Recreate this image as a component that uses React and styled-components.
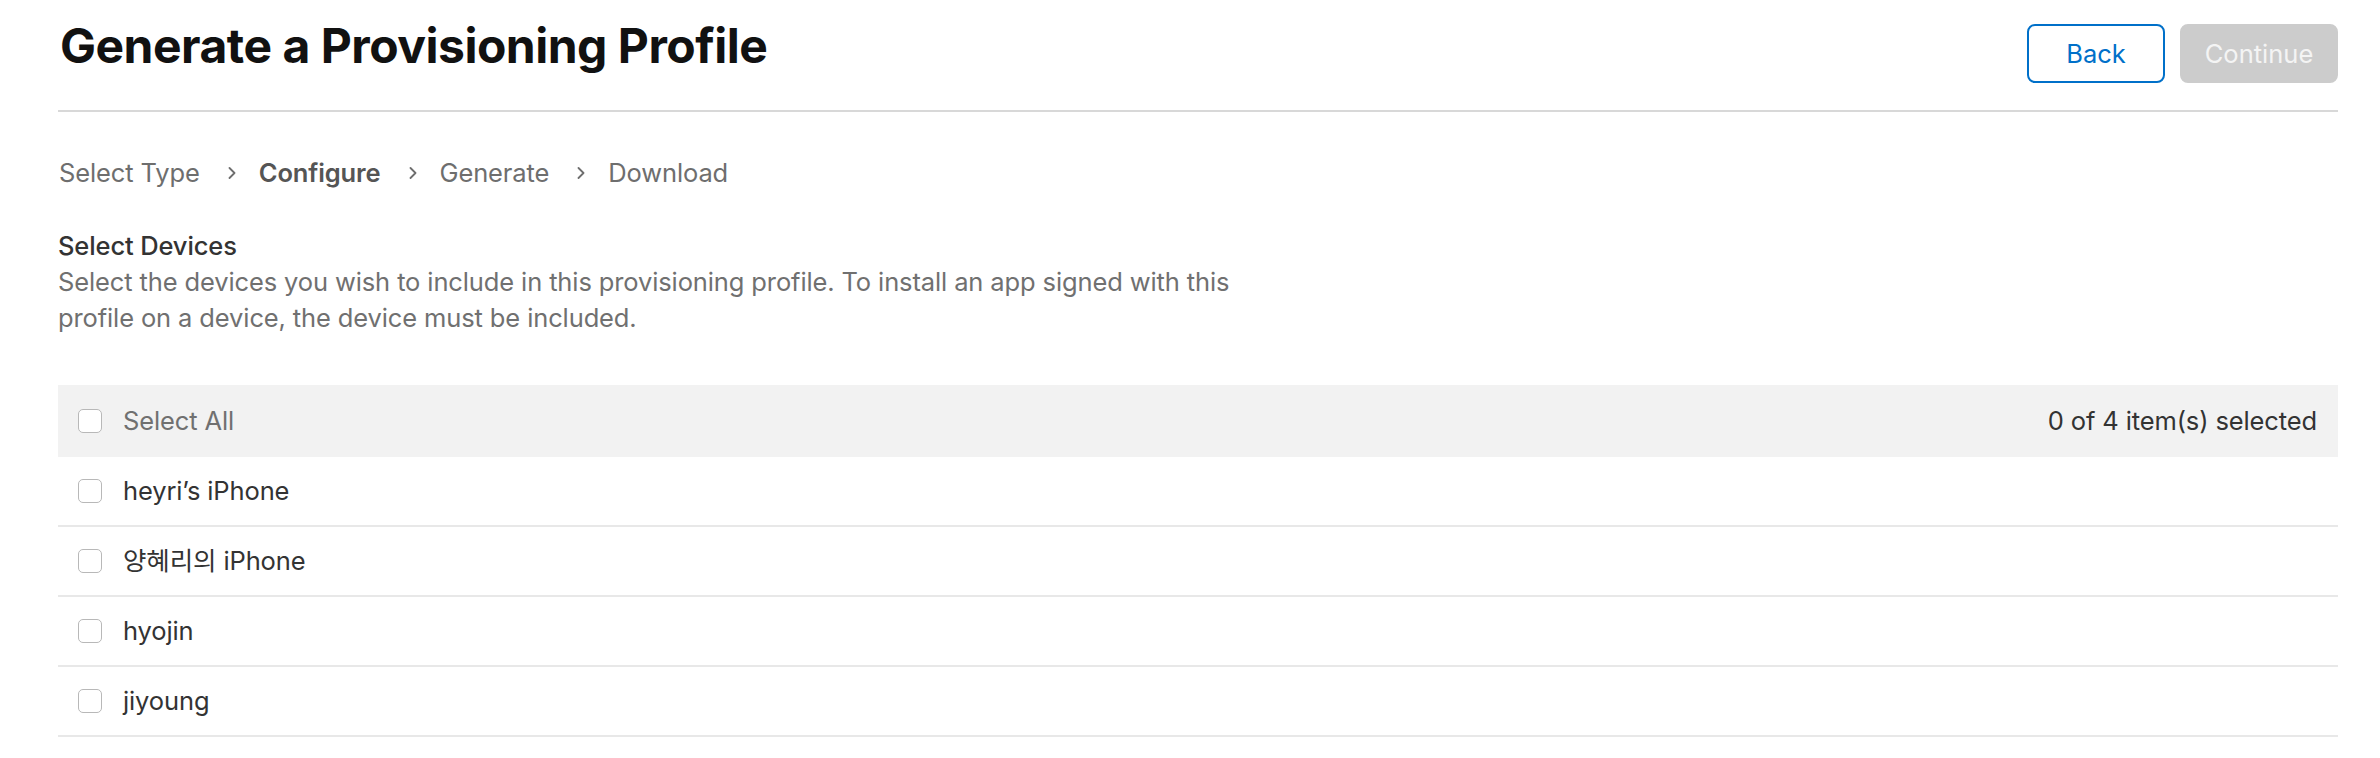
import React from "react";
import styled, { createGlobalStyle } from "styled-components";

const GlobalStyle = createGlobalStyle`
  body {
    margin: 0;
    background: #ffffff;
    font-family: Inter, "Noto Sans CJK KR", sans-serif;
  }
`;

const devices = ["heyri’s iPhone", "양혜리의 iPhone", "hyojin", "jiyoung"];
const steps = [
  { label: "Select Type" },
  { label: "Configure", active: true },
  { label: "Generate" },
  { label: "Download" },
];

const Chevron = () => (
  <svg width="8" height="12" viewBox="0 0 8 12">
    <polyline
      points="1.5,1 6.5,6 1.5,11"
      fill="none"
      stroke="#6e6e6e"
      strokeWidth="1.8"
      strokeLinecap="round"
      strokeLinejoin="round"
    />
  </svg>
);

const App = () => {
  return (
    <>
      <GlobalStyle />
      <Page>
        <Header>
          <Title>Generate a Provisioning Profile</Title>
          <Actions>
            <Button variant="outline">Back</Button>
            <Button variant="disabled">Continue</Button>
          </Actions>
        </Header>

        <Steps>
          {steps.map((step, index) => (
            <React.Fragment key={step.label}>
              {index > 0 && (
                <StepArrow>
                  <Chevron />
                </StepArrow>
              )}
              <Step active={step.active}>{step.label}</Step>
            </React.Fragment>
          ))}
        </Steps>

        <Section>
          <SectionTitle>Select Devices</SectionTitle>
          <SectionText>
            Select the devices you wish to include in this provisioning profile. To install an app signed with this
            <br />
            profile on a device, the device must be included.
          </SectionText>
        </Section>

        <DeviceList>
          <ListHead>
            <Label muted>
              <Check type="checkbox" />
              Select All
            </Label>
            <Count>0 of {devices.length} item(s) selected</Count>
          </ListHead>
          {devices.map((name) => (
            <DeviceRow key={name}>
              <Label>
                <Check type="checkbox" />
                {name}
              </Label>
            </DeviceRow>
          ))}
        </DeviceList>
      </Page>
    </>
  );
};

const Page = styled.div`
  padding: 0 42px 0 58px;
  color: #333333;
  font-size: 25.5px;
  line-height: 36px;
  letter-spacing: -0.12px;
`;

const Header = styled.div`
  height: 110px;
  display: flex;
  justify-content: space-between;
  align-items: flex-start;
  border-bottom: 2px solid #d8d8d8;
`;

const Title = styled.h1`
  margin: 17px 0 0 2px;
  font-size: 48px;
  line-height: 58px;
  font-weight: 700;
  color: #111111;
  letter-spacing: -0.5px;
`;

const Actions = styled.div`
  display: flex;
  gap: 15px;
  margin-top: 24px;
`;

const Button = styled.button`
  height: 59px;
  padding: 0;
  width: ${(p) => (p.variant === "outline" ? "138px" : "158px")};
  border-radius: 8px;
  font-family: inherit;
  font-size: 25.5px;
  border: 2px solid ${(p) => (p.variant === "outline" ? "#0070c9" : "#cccccc")};
  background: ${(p) => (p.variant === "outline" ? "#ffffff" : "#cccccc")};
  color: ${(p) => (p.variant === "outline" ? "#0070c9" : "#f4f4f4")};
`;

const Steps = styled.div`
  display: flex;
  align-items: center;
  margin-top: 43px;
  padding-left: 1px;
`;

const Step = styled.span`
  color: ${(p) => (p.active ? "#555555" : "#6e6e6e")};
  font-weight: ${(p) => (p.active ? 600 : 400)};
`;

const StepArrow = styled.span`
  display: flex;
  margin: 0 23px 0 28px;
`;

const Section = styled.div`
  margin-top: 37px;
`;

const SectionTitle = styled.div`
  color: #333333;
  font-weight: 500;
`;

const SectionText = styled.p`
  margin: 0;
  color: #707070;
`;

const DeviceList = styled.div`
  margin-top: 49px;
`;

const ListHead = styled.div`
  height: 72px;
  background: #f2f2f2;
  display: flex;
  align-items: center;
  justify-content: space-between;
  padding: 0 21px 0 20px;
`;

const DeviceRow = styled.div`
  height: 68px;
  display: flex;
  align-items: center;
  padding-left: 20px;
  border-bottom: 2px solid #e8e8e8;
`;

const Label = styled.label`
  display: flex;
  align-items: center;
  gap: 21px;
  color: ${(p) => (p.muted ? "#707070" : "#333333")};
`;

const Check = styled.input`
  appearance: none;
  margin: 0;
  width: 24px;
  height: 24px;
  border: 1.5px solid #b8b8b8;
  border-radius: 5px;
  background: #ffffff;
`;

const Count = styled.span`
  color: #333333;
`;

export default App;
